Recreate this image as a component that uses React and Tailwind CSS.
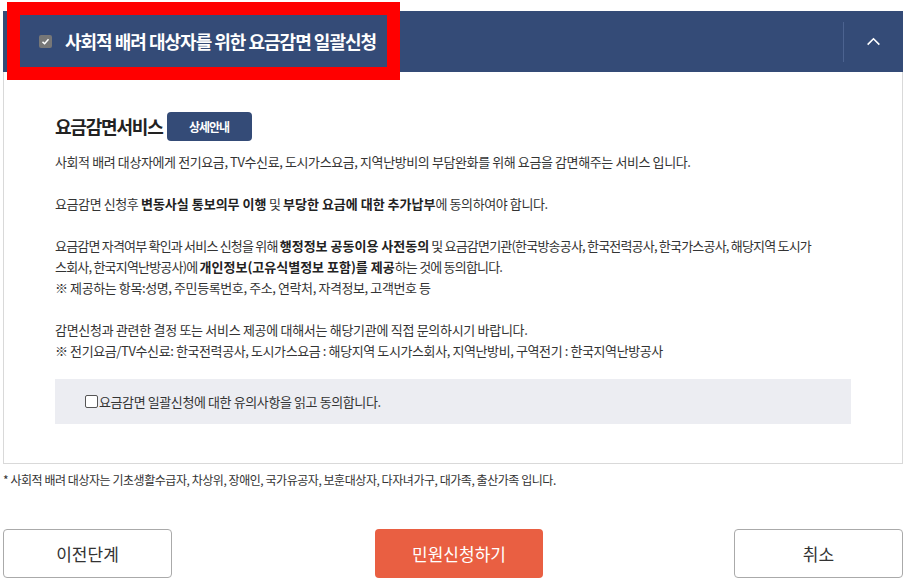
import React from 'react';

const KR = { fontFamily: '"Noto Sans CJK KR", "Noto Sans", sans-serif' };

const Check = () => (
  <svg viewBox="0 0 12 12" className="w-[9px] h-[9px]">
    <path d="M2 6.5 L4.8 9 L10 3" fill="none" stroke="#fff" strokeWidth="2" />
  </svg>
);

const B = ({ children }) => <b className="text-[#222] tracking-[0px]">{children}</b>;

export default function App() {
  return (
    <div className="relative w-[914px] h-[584px] bg-white text-[#333]" style={KR}>
      <div className="pl-[3px] pt-[11px] w-[903px]">
        <div className="h-[61px] bg-[#344b77] flex items-center">
          <div className="flex-1 flex items-center pl-[36px]">
            <span className="w-[13px] h-[13px] rounded-[2px] bg-[#777] flex items-center justify-center">
              <Check />
            </span>
            <span className="ml-[13px] text-white text-[18px] font-bold tracking-[-1px]">
              사회적 배려 대상자를 위한 요금감면 일괄신청
            </span>
          </div>
          <div className="w-[60px] h-[40px] border-l border-[#4c6390] flex items-center justify-center">
            <svg viewBox="0 0 16 10" className="w-[15px] h-[9px]">
              <path d="M1.5 8.5 L8 2 L14.5 8.5" fill="none" stroke="#fff" strokeWidth="1.8" />
            </svg>
          </div>
        </div>

        <div className="border border-t-0 border-[#d9d9d9] px-[51px] pt-[40px] pb-[39px]">
          <div className="flex items-center h-[29px]">
            <h2 className="text-[18px] font-bold text-[#222] tracking-[-1.2px]">요금감면서비스</h2>
            <button className="ml-[4px] w-[85px] h-[29px] rounded-[4px] bg-[#344b77] text-white text-[12px] font-bold tracking-[-1px]">
              상세안내
            </button>
          </div>

          <div className="mt-[10px] text-[13px] leading-[21px] tracking-[-0.4px]">
            <p>사회적 배려 대상자에게 전기요금, TV수신료, 도시가스요금, 지역난방비의 부담완화를 위해 요금을 감면해주는 서비스 입니다.</p>
            <p className="mt-[21px]">
              요금감면 신청후 <B>변동사실 통보의무 이행</B> 및 <B>부당한 요금에 대한 추가납부</B>에 동의하여야 합니다.
            </p>
            <p className="mt-[21px]">
              <span className="whitespace-nowrap tracking-[-0.8px]">
                요금감면 자격여부 확인과 서비스 신청을 위해 <B>행정정보 공동이용 사전동의</B> 및 요금감면기관(한국방송공사, 한국전력공사, 한국가스공사, 해당지역 도시가
              </span>
              <br />
              <span className="tracking-[-0.8px]">
                스회사, 한국지역난방공사)에 <B>개인정보(고유식별정보 포함)를 제공</B>하는 것에 동의합니다.
              </span>
              <br />
              ※ 제공하는 항목:성명, 주민등록번호, 주소, 연락처, 자격정보, 고객번호 등
            </p>
            <p className="mt-[21px]">
              <span className="tracking-[-0.3px]">감면신청과 관련한 결정 또는 서비스 제공에 대해서는 해당기관에 직접 문의하시기 바랍니다.</span>
              <br />
              ※ 전기요금/TV수신료: 한국전력공사, 도시가스요금 : 해당지역 도시가스회사, 지역난방비, 구역전기 : 한국지역난방공사
            </p>
          </div>

          <label className="mt-[18px] h-[45px] bg-[#ecedf2] flex items-center pl-[30px] text-[13px] tracking-[-0.4px]">
            <span className="w-[13px] h-[13px] rounded-[2px] border border-[#555] bg-white"></span>
            <span className="ml-[1px]">요금감면 일괄신청에 대한 유의사항을 읽고 동의합니다.</span>
          </label>
        </div>

        <p className="mt-[8px] text-[12px] leading-[16px] tracking-[-0.45px] text-[#333]">
          * 사회적 배려 대상자는 기초생활수급자, 차상위, 장애인, 국가유공자, 보훈대상자, 다자녀가구, 대가족, 출산가족 입니다.
        </p>

        <div className="mt-[41px] flex items-center">
          <button className="w-[169px] h-[49px] rounded-[4px] border border-[#aaa] bg-white text-[17px] text-[#333]">
            이전단계
          </button>
          <button className="ml-[203px] w-[168px] h-[49px] rounded-[4px] bg-[#e95f42] text-white text-[17px]">
            민원신청하기
          </button>
          <button className="ml-auto w-[169px] h-[49px] rounded-[4px] border border-[#aaa] bg-white text-[17px] text-[#333]">
            취소
          </button>
        </div>
      </div>

      <div className="absolute left-[7px] top-[2px] w-[393px] h-[78px] border-[13px] border-[#ff0000]"></div>
    </div>
  );
}
